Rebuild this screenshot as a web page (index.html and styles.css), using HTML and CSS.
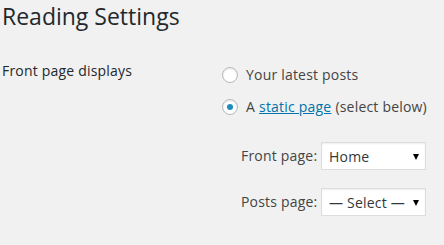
FILE: index.html
```html
<!DOCTYPE html>
<html>
<head>
  <title>Reading Settings</title>
  <link rel="stylesheet" href="styles.css">
</head>
<body>

  <div class="wrap">
    <h1>Reading Settings</h1>

    <div class="setting-row">
      <div class="setting-label">Front page displays</div>
      <div class="setting-field">
        <label class="choice">
          <input type="radio" name="show_on_front" value="posts" />
          Your latest posts
        </label>
        <label class="choice">
          <input type="radio" name="show_on_front" value="page" checked />
          A <a href="#">static page</a> (select below)
        </label>

        <div class="page-pickers">
          <label for="page_on_front">Front page:</label>
          <span class="select-box">
            <select id="page_on_front">
              <option>Home</option>
            </select>
          </span>

          <label for="page_for_posts">Posts page:</label>
          <span class="select-box">
            <select id="page_for_posts">
              <option>— Select —</option>
            </select>
          </span>
        </div>
      </div>
    </div>
  </div>

</body>
</html>
```

FILE: styles.css
```css
body {
  margin: 0;
  background: #f1f1f1;
  color: #444;
  font-family: "Open Sans", sans-serif;
  font-size: 14px;
  line-height: 20px;
  letter-spacing: 0.2px;
}

.wrap {
  padding: 2px 0 0 2px;
}

h1 {
  margin: 0;
  font-size: 23px;
  font-weight: 400;
  line-height: 29px;
  letter-spacing: 0;
  color: #23282d;
}

.setting-row {
  display: flex;
  margin-top: 30px;
}

.setting-label {
  width: 220px;
  color: #23282d;
  font-weight: 500;
}

.setting-field {
  padding-top: 4px;
}

.choice {
  display: flex;
  align-items: center;
  margin-bottom: 12px;
}

.choice input {
  appearance: none;
  width: 16px;
  height: 16px;
  margin: 0 8px 0 0;
  border: 1px solid #b4b9be;
  border-radius: 50%;
  background: #fff;
  box-shadow: inset 0 1px 2px rgba(0,0,0,0.1);
  display: flex;
  align-items: center;
  justify-content: center;
}

.choice input:checked::before {
  content: "";
  width: 6px;
  height: 6px;
  border-radius: 50%;
  background: #1e8cbe;
}

.choice a {
  color: #0073aa;
  margin: 0 4px;
}

.page-pickers {
  display: grid;
  grid-template-columns: 80px 105px;
  row-gap: 18px;
  align-items: center;
  margin: 25px 0 0 19px;
}

.select-box {
  position: relative;
  display: block;
}

.select-box::after {
  content: "";
  position: absolute;
  right: 7px;
  top: 12px;
  border-left: 3.5px solid transparent;
  border-right: 3.5px solid transparent;
  border-top: 6px solid #000;
  pointer-events: none;
}

select {
  appearance: none;
  display: block;
  width: 105px;
  height: 28px;
  margin: 0;
  padding: 0 0 0 7px;
  border: 1px solid #ddd;
  border-radius: 0;
  background: #fff;
  box-shadow: inset 0 1px 2px rgba(0,0,0,0.07);
  color: #32373c;
  font-family: "Open Sans", sans-serif;
  font-size: 14px;
  letter-spacing: 0.2px;
}
```
